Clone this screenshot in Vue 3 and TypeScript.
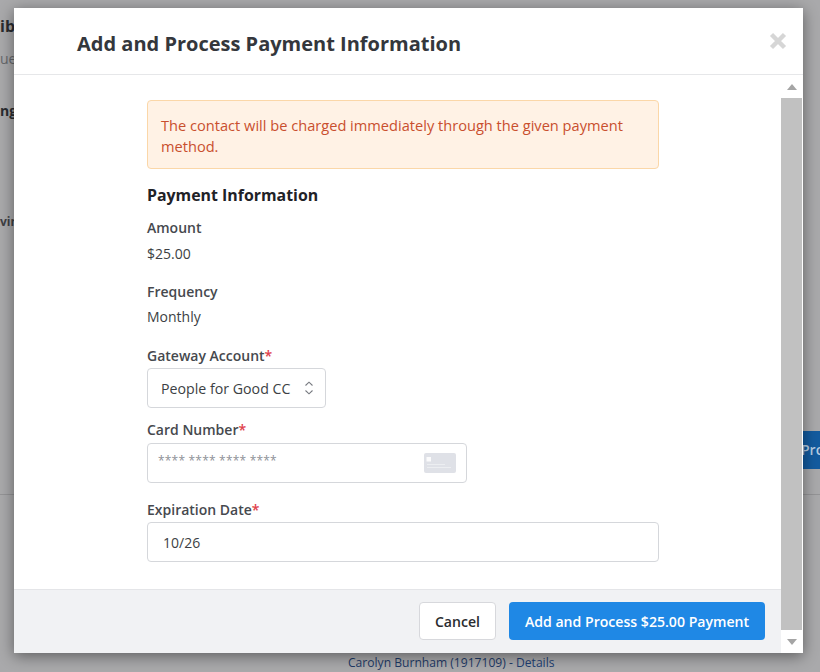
<script setup lang="ts">
const amount: string = '$25.00'
const frequency: string = 'Monthly'
</script>

<template>
  <div class="page">
    <div class="bg-left">
      <b class="f1">ib</b>
      <span class="f2">ues</span>
      <b class="f3">ng</b>
      <b class="f4">vin</b>
    </div>
    <div class="bg-right">
      <div class="bg-btn">Pro</div>
    </div>
    <div class="bg-rule"></div>
    <div class="bg-foot">Carolyn Burnham (1917109) - <span>Details</span></div>
  </div>

  <div class="modal">
    <header class="head">
      <h2>Add and Process Payment Information</h2>
      <svg class="close" width="18" height="18" viewBox="0 0 18 18" aria-label="Close">
        <path d="M2.5 2.5 15.5 15.5M15.5 2.5 2.5 15.5" stroke="#d6d6d6" stroke-width="4.4" fill="none" />
      </svg>
    </header>
    <div class="lower">
      <div class="main">
        <div class="body">
          <div class="content">
            <div class="alert">The contact will be charged immediately through the given payment method.</div>
            <h3>Payment Information</h3>
            <div class="lbl l-amount">Amount</div>
            <div class="val v-amount">{{ amount }}</div>
            <div class="lbl l-freq">Frequency</div>
            <div class="val v-freq">{{ frequency }}</div>
            <div class="lbl l-gate">Gateway Account<i>*</i></div>
            <div class="select">
              <span>People for Good CC</span>
              <svg width="10" height="14" viewBox="0 0 10 14">
                <path d="M1.5 4.5 5 1.2 8.5 4.5M1.5 9.5 5 12.8 8.5 9.5" fill="none" stroke="#777a80" stroke-width="1.1" />
              </svg>
            </div>
            <div class="lbl l-card">Card Number<i>*</i></div>
            <div class="card">
              <span class="ph">**** **** **** ****</span>
              <svg width="32" height="20" viewBox="0 0 32 20">
                <rect width="32" height="20" rx="2" fill="#dfe1e7" />
                <rect x="2.5" y="4" width="4.5" height="4.5" fill="#fbfbfc" />
                <rect x="3" y="11" width="18" height="1" fill="#eceef1" />
                <rect x="3" y="14" width="24" height="1" fill="#eceef1" />
              </svg>
            </div>
            <div class="lbl l-exp">Expiration Date<i>*</i></div>
            <div class="date">10/26</div>
          </div>
        </div>
        <footer class="foot">
          <button class="btn cancel">Cancel</button>
          <button class="btn primary">Add and Process {{ amount }} Payment</button>
        </footer>
      </div>
      <div class="scroll">
        <div class="arrow"><span class="up"></span></div>
        <div class="thumb"></div>
        <div class="arrow"><span class="down"></span></div>
      </div>
    </div>
  </div>
</template>

<style>
html, body { margin: 0; background: #a9a9ab; }
</style>

<style scoped>
.page {
  position: relative;
  width: 820px;
  height: 672px;
  overflow: hidden;
  background: #a9a9ab;
  font-family: "Open Sans", "Noto Sans", sans-serif;
  color: #2a2c30;
}
.bg-left { position: absolute; left: 0; top: 0; width: 14px; font-size: 14px; white-space: nowrap; }
.bg-left > * { position: absolute; left: 0; line-height: 18px; }
.f1 { top: 17px; font-size: 16px; }
.f2 { top: 50px; color: #66686c; }
.f3 { top: 102px; }
.f4 { top: 213px; font-size: 12px; color: #3e4044; }
.bg-right { position: absolute; left: 803px; top: 431px; width: 17px; overflow: hidden; }
.bg-btn {
  width: 60px; height: 38px; line-height: 38px; background: #135b9f;
  color: #b7cde2; font-weight: 600; font-size: 14px; text-indent: -2px;
}
.bg-rule { position: absolute; left: 0; right: 0; top: 494px; height: 1px; background: #949496; }
.bg-foot { position: absolute; left: 348px; top: 654px; font-size: 12.1px; line-height: 18px; color: #1e3a66; white-space: nowrap; }
.bg-foot span { color: #1e3f73; }

.modal {
  position: absolute;
  left: 14px;
  top: 8px;
  width: 789px;
  height: 645px;
  background: #fff;
  display: flex;
  flex-direction: column;
  box-shadow: 0 3px 14px rgba(0, 0, 0, 0.45);
  font-family: "Open Sans", "Noto Sans", sans-serif;
  color: #2f3237;
}
.head {
  height: 67px;
  flex: none;
  box-sizing: border-box;
  border-bottom: 1px solid #e6e7e9;
  display: flex;
  align-items: flex-start;
  justify-content: space-between;
  padding: 0 16px 0 63px;
}
h2 { margin: 22px 0 0; font-size: 20px; line-height: 28px; font-weight: 700; color: #34373c; }
.close { margin-top: 24px; }
.lower { flex: 1; min-height: 0; display: flex; }
.main { flex: 1; min-width: 0; display: flex; flex-direction: column; }
.body { flex: 1; min-height: 0; padding: 25px 0 0 133px; }
.content { width: 512px; }
.alert {
  box-sizing: border-box;
  height: 69px;
  padding: 14px 13px;
  border: 1px solid #fbd7a8;
  border-radius: 4px;
  background: #fff2e5;
  color: #c94f2e;
  font-size: 14.62px;
  line-height: 21px;
}
h3 { margin: 14px 0 0; font-size: 15.9px; line-height: 24px; font-weight: 700; color: #1f2227; }
.lbl { font-size: 14px; line-height: 20px; font-weight: 600; color: #46494e; }
.lbl i { color: #e0404a; font-style: normal; }
.l-amount { margin-top: 11px; }
.val { font-size: 14px; line-height: 20px; margin-top: 5px; color: #3c3f44; }
.v-amount { margin-top: 6px; }
.l-freq { margin-top: 18px; }
.v-freq { margin-top: 5px; }
.l-gate { margin-top: 19px; }
.select, .card, .date {
  box-sizing: border-box;
  height: 40px;
  border: 1px solid #d5d7db;
  border-radius: 4px;
  background: #fff;
  display: flex;
  align-items: center;
  font-size: 14px;
  color: #3c3f44;
}
.select { width: 179px; margin-top: 2px; padding: 0 11px 0 13px; justify-content: space-between; font-size: 14.2px; }
.l-card { margin-top: 12px; }
.card { width: 320px; margin-top: 3px; padding: 0 10px 0 10px; justify-content: space-between; }
.ph { color: #8d9096; font-size: 12px; letter-spacing: 0.2px; margin-bottom: 6px; }
.l-exp { margin-top: 17px; }
.date { margin-top: 2px; padding-left: 15px; }
.foot {
  height: 64px;
  flex: none;
  box-sizing: border-box;
  border-top: 1px solid #e4e5e8;
  background: #f1f2f4;
  display: flex;
  justify-content: flex-end;
  align-items: flex-start;
  gap: 13px;
  padding: 12px 16px 0 0;
}
.btn {
  height: 38px;
  border-radius: 4px;
  font-family: inherit;
  font-size: 14.1px;
  font-weight: 600;
  padding: 0;
}
.cancel { width: 77px; background: #fff; border: 1px solid #d7d8dc; color: #2a2c30; }
.primary { width: 256px; background: #1f88e5; border: 0; color: #fff; }
.scroll { width: 21px; flex: none; margin-right: 1px; display: flex; flex-direction: column; }
.arrow { height: 23px; flex: none; display: flex; align-items: center; justify-content: center; }
.thumb { flex: 1; background: #c1c1c1; }
.up, .down { width: 0; height: 0; border-left: 5px solid transparent; border-right: 5px solid transparent; }
.up { border-bottom: 6px solid #a5a5a5; }
.down { border-top: 6px solid #a5a5a5; }
</style>
